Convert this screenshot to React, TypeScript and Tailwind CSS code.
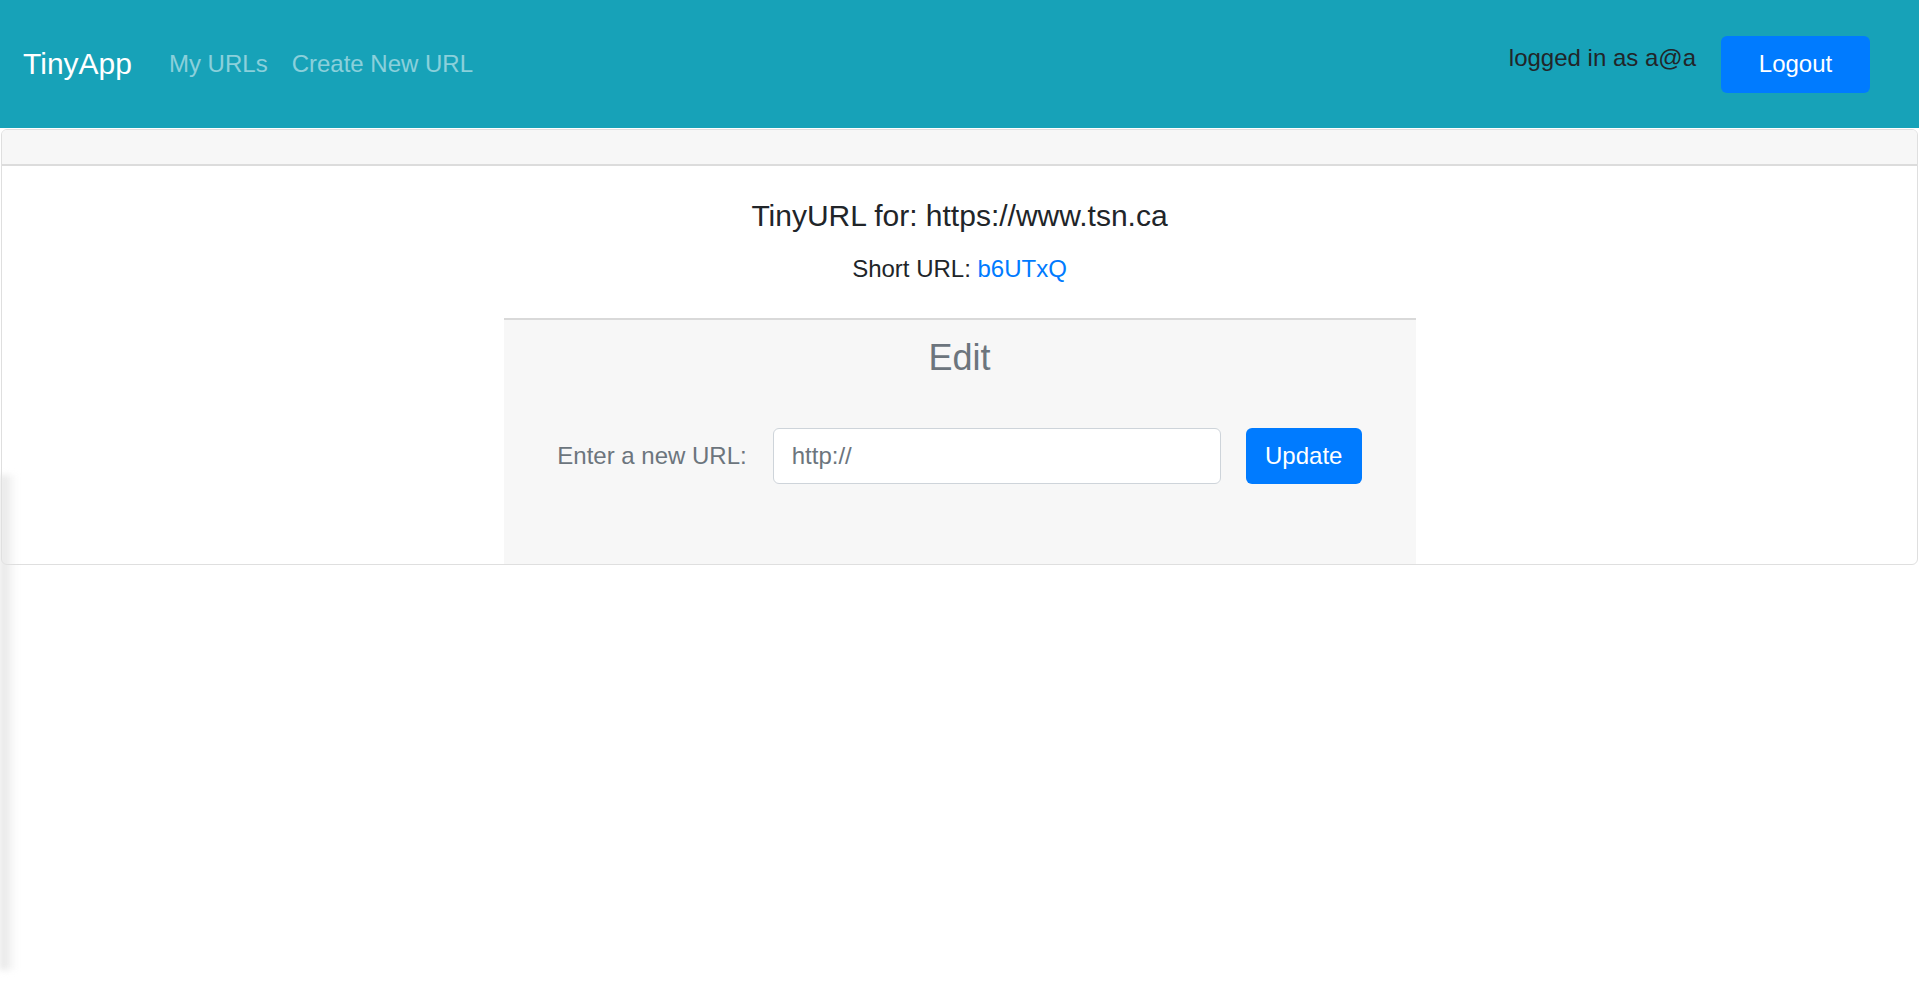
import { useState } from "react";

export default function App() {
  const [url, setUrl] = useState("");

  return (
    <div className="relative min-h-[996px] bg-white text-[#212529] font-['Liberation_Sans',Arial,sans-serif]">
      {/* Navbar */}
      <nav className="h-[128px] bg-[#17a2b8] flex items-center pl-[23px] pr-[49px]">
        <a className="text-[30px] leading-none text-white mr-[25px]">TinyApp</a>
        <div className="flex items-center">
          <a className="text-[24px] leading-none text-white/50 px-[12px]">My URLs</a>
          <a className="text-[24px] leading-none text-white/50 px-[12px]">Create New URL</a>
        </div>
        <div className="ml-auto flex items-center gap-[25px]">
          <span className="text-[24px] leading-none text-[#212529] -mt-[12px]">logged in as a@a</span>
          <button className="w-[149px] h-[57px] rounded-[6px] bg-[#007bff] text-white text-[24px] leading-none">
            Logout
          </button>
        </div>
      </nav>

      {/* Card */}
      <div className="mx-px mt-px border border-[#dfdfdf] rounded-[6px] overflow-hidden">
        <div className="h-[36px] bg-[#f7f7f7] border-b-2 border-[#dcdcdc]" />
        <div className="pt-[32px] flex flex-col items-center">
          <h5 className="text-[30px] leading-[36px] text-[#212529]">TinyURL for: https://www.tsn.ca</h5>
          <p className="mt-[17px] text-[24px] leading-[36px]">
            Short URL: <a className="text-[#007bff]">b6UTxQ</a>
          </p>
          <div className="mt-[31px] w-[912px] bg-[#f7f7f7] border-t-2 border-[#d9d9d9] pt-[16px] pb-[80px]">
            <h4 className="text-center text-[36px] leading-[43px] text-[#6c757d]">Edit</h4>
            <form className="mt-[49px] flex items-center justify-center" onSubmit={(e) => e.preventDefault()}>
              <label className="text-[24px] leading-none text-[#6c757d] mr-[26px]">Enter a new URL:</label>
              <input
                value={url}
                onChange={(e) => setUrl(e.target.value)}
                placeholder="http://"
                className="w-[448px] h-[56px] px-[18px] bg-white border-[1.5px] border-[#ced4da] rounded-[6px] text-[24px] placeholder:text-[#6c757d] outline-none"
              />
              <button className="ml-[25px] w-[116px] h-[56px] rounded-[6px] bg-[#007bff] text-white text-[24px] leading-none">
                Update
              </button>
            </form>
          </div>
        </div>
      </div>

      {/* faint left shadow */}
      <div className="absolute left-0 top-[475px] h-[495px] w-[16px] bg-gradient-to-r from-[#e0e0e0] to-transparent blur-[3px]" />
    </div>
  );
}
